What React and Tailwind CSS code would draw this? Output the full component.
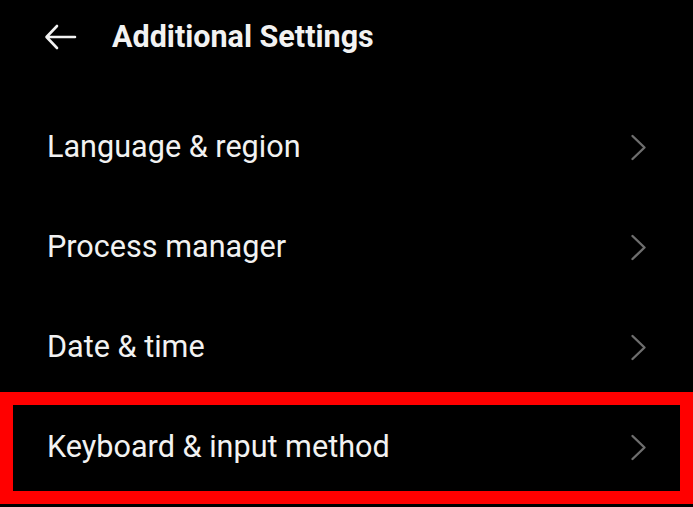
import React from 'react'

const items = ['Language & region', 'Process manager', 'Date & time', 'Keyboard & input method']

function Chevron() {
  return (
    <svg width="17" height="27" viewBox="0 0 17 27" fill="none" className="shrink-0">
      <path d="M2.5 2 L14.5 13.5 L2.5 25" stroke="#6e6e6e" strokeWidth="2.4" strokeLinecap="round" strokeLinejoin="round" />
    </svg>
  )
}

export default function App() {
  return (
    <div className="w-[693px] h-[507px] bg-black text-[#f2f2f2] overflow-hidden" style={{ fontFamily: 'Roboto, "Noto Sans", sans-serif' }}>
      {/* Header */}
      <div className="h-[74px] flex items-center pl-[44px]">
        <svg width="33" height="26" viewBox="0 0 33 26" fill="none">
          <path d="M31 13 H3 M13 2 L2.5 13 L13 24" stroke="#f2f2f2" strokeWidth="2.6" strokeLinecap="round" strokeLinejoin="round" />
        </svg>
        <h1 className="ml-[35px] text-[30.5px] font-bold">Additional Settings</h1>
      </div>

      {/* List */}
      <div className="mt-[23px]">
        {items.map((label, i) => (
          <div key={label} className="relative">
            <div className="h-[100px] flex items-center justify-between pl-[47px] pr-[46px]">
              <span className="text-[30.6px]">{label}</span>
              <Chevron />
            </div>
            {i === items.length - 1 && (
              <div className="absolute left-0 right-0 top-[-5px] h-[112px] border-[13px] border-[#ff0000] pointer-events-none" />
            )}
          </div>
        ))}
      </div>
    </div>
  )
}
